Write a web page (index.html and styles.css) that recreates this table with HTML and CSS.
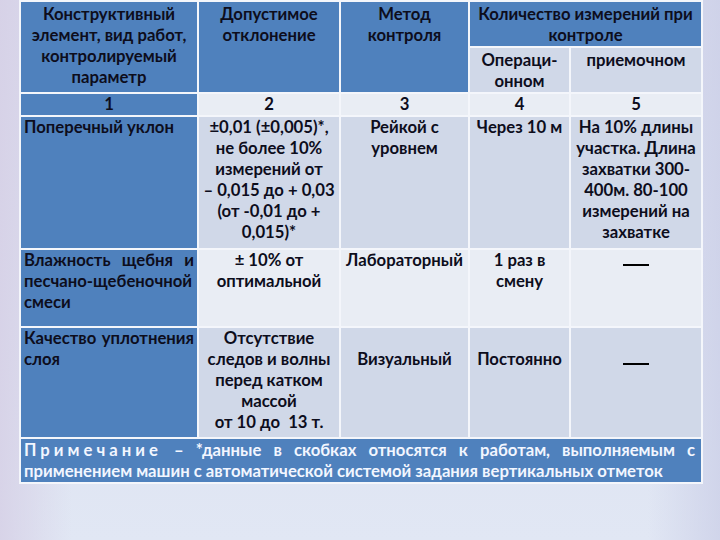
FILE: index.html
```html
<!DOCTYPE html>
<html lang="ru">
<head>
<meta charset="utf-8">
<link rel="stylesheet" href="styles.css">
</head>
<body>
<div class="slide">
<table class="tbl">
  <colgroup>
    <col class="c1"><col class="c2"><col class="c3"><col class="c4"><col class="c5">
  </colgroup>
  <tr class="h1">
    <td class="cell-blue center head" rowspan="2">Конструктивный элемент, вид работ, контролируемый параметр</td>
    <td class="cell-blue center head" rowspan="2">Допустимое отклонение</td>
    <td class="cell-blue center head" rowspan="2">Метод контроля</td>
    <td class="cell-blue center head" colspan="2">Количество измерений при контроле</td>
  </tr>
  <tr class="h2">
    <td class="cell-mid center head">Операци-<br>онном</td>
    <td class="cell-mid center head">приемочном</td>
  </tr>
  <tr class="num">
    <td class="cell-blue center">1</td>
    <td class="cell-pale center">2</td>
    <td class="cell-pale center">3</td>
    <td class="cell-pale center">4</td>
    <td class="cell-pale center">5</td>
  </tr>
  <tr class="r1">
    <td class="cell-blue">Поперечный уклон</td>
    <td class="cell-mid center">±0,01 (±0,005)*, не более 10% измерений от <span class="nw">– 0,015 до + 0,03</span> (от -0,01 до + 0,015)*</td>
    <td class="cell-mid center">Рейкой с уровнем</td>
    <td class="cell-mid center">Через 10 м</td>
    <td class="cell-mid center">На 10% длины участка. Длина захватки 300-400м. 80-100 измерений на захватке</td>
  </tr>
  <tr class="r2">
    <td class="cell-blue just">Влажность щебня и песчано-щебеночной смеси</td>
    <td class="cell-pale center">± 10% от оптимальной</td>
    <td class="cell-pale center">Лабораторный</td>
    <td class="cell-pale center">1 раз в смену</td>
    <td class="cell-pale center"><span class="dash"></span></td>
  </tr>
  <tr class="r3">
    <td class="cell-blue just">Качество уплотнения слоя</td>
    <td class="cell-mid center">Отсутствие следов и волны перед катком массой<br>от 10 до &nbsp;13 т.</td>
    <td class="cell-mid center"><br>Визуальный</td>
    <td class="cell-mid center"><br>Постоянно</td>
    <td class="cell-mid center"><br><span class="dash"></span></td>
  </tr>
  <tr class="note">
    <td class="cell-blue notecell" colspan="5"><span class="sp">Примечание</span> – *данные в скобках относятся к работам, выполняемым с применением машин с автоматической системой задания вертикальных отметок</td>
  </tr>
</table>
</div>
</body>
</html>
```
FILE: styles.css
```css
html, body {
  margin: 0;
  padding: 0;
}
.slide {
  width: 720px;
  height: 540px;
  overflow: hidden;
  background:
    linear-gradient(90deg, rgba(214,208,230,0.85) 0%, rgba(220,224,240,0) 10%, rgba(220,224,240,0) 90%, rgba(204,208,232,0.8) 100%),
    linear-gradient(180deg, #dadcee 0%, #dde2f1 60%, #e1e7f4 100%);
  padding: 0 0 0 19px;
  box-sizing: border-box;
}
.tbl {
  border-collapse: collapse;
  table-layout: fixed;
  width: 682px;
  font-family: Lato, "Open Sans", sans-serif;
  font-weight: 700;
  font-size: 16.7px;
  line-height: 21px;
  color: #0d0d1c;
}
.c1 { width: 178px; }
.c2 { width: 142px; }
.c3 { width: 129px; }
.c4 { width: 101px; }
.c5 { width: 132px; }
.tbl td {
  border: 2px solid #f4f6fb;
  padding: 0 3px 0 3px;
  vertical-align: top;
}
.tbl td.head { padding-top: 2px; }
.tbl td.cell-blue { background-color: #4f81bd; }
.tbl td.cell-mid { background-color: #d0d8e8; }
.tbl td.cell-pale { background-color: #e9edf4; }
.center { text-align: center; }
.just { text-align: justify; }
.nw { white-space: nowrap; }
.h1 { height: 44px; }
.h2 { height: 44px; }
.num { height: 22px; }
.r1 { height: 133px; }
.r2 { height: 78px; }
.r3 { height: 111px; }
.note { height: 45px; }
.tbl .num td { vertical-align: middle; }
.tbl td.notecell {
  color: #f2f6ff;
  text-align: justify;
  padding: 1px 6px 0 3px;
}
.sp { letter-spacing: 4px; }
.dash {
  display: inline-block;
  width: 26px;
  height: 2px;
  background: #000;
  vertical-align: baseline;
}
```
